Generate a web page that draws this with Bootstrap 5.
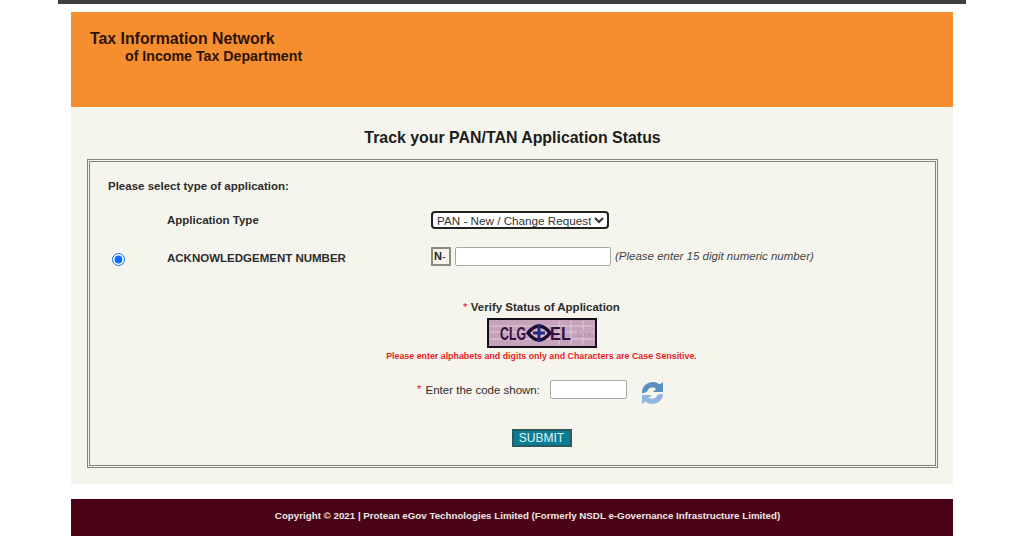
<!DOCTYPE html>
<html lang="en">
<head>
    <meta charset="UTF-8">
    <title>Track your PAN/TAN Application Status</title>
    <link href="https://cdn.jsdelivr.net/npm/bootstrap@5.3.0/dist/css/bootstrap.min.css" rel="stylesheet">
    <style>
        body { background: #fff; font-family: "Liberation Sans", Arial, sans-serif; color: #222; font-size: 11.5px; height: 536px; overflow: hidden; }
        .top-strip { width: 908px; height: 4px; margin: 0 0 8px 58px; background: #3f3f3f; }
        .page-wrap { width: 882px; margin-left: 71px; }
        .tin-head { height: 95px; background: #f68e2f; padding: 18px 0 0 19px; color: #2a1405; font-weight: 700; }
        .tin-head .l1 { font-size: 15.85px; line-height: 18px; }
        .tin-head .l2 { font-size: 14.2px; line-height: 17px; padding-left: 35px; }
        .tin-main { height: 377px; background: #f6f5ed; padding: 22px 15px 0 16px; }
        .tin-title { font-size: 15.9px; font-weight: 700; line-height: 18px; text-align: center; color: #1c1c1c; margin: 0 0 12px 0; }
        .tin-box { height: 309px; border: 3px double #85857f; padding: 17px 20px 0 18px; }
        .sel-note { font-weight: 700; line-height: 14px; margin-bottom: 17px; color: #2c2c2c; }
        .form-line { display: flex; align-items: center; }
        .radio-col { width: 59px; padding-left: 4px; }
        .radio-col input { display: block; margin: 0; width: 13px; height: 13px; accent-color: #0d6efd; }
        .label-col { width: 264px; font-weight: 700; color: #2c2c2c; }
        .type-line { height: 20px; margin-bottom: 18px; }
        .type-line .label-col { margin-top: 2px; }
        .type-select { font: 11.7px "Liberation Sans", Arial, sans-serif; width: 178px; height: 18px; color: #333; background: #fff; border: 2px solid #222; border-radius: 4px; padding: 0; }
        .ack-line { height: 22px; margin-bottom: 30px; }
        .n-tag { width: 20px; height: 19px; line-height: 15px; border: 2px solid #8c8c86; font-size: 11px; padding-left: 1px; margin-right: 4px; margin-top: -5px; background: #f6f5ed; color: #222; }
        .plain-input { border: 1px solid #a9a9a3; border-radius: 2px; background: #fff; height: 19px; padding: 0; }
        .ack-input { width: 156px; margin-right: 4px; margin-top: -5px; }
        .hint-text { font-style: italic; color: #444; margin-top: -5px; }
        .verify-block { text-align: center; padding-left: 60px; }
        .verify-title { font-weight: 700; line-height: 14px; color: #2c2c2c; margin-bottom: 4px; }
        .star { color: #e0262c; font-weight: 400; }
        .captcha-pic { display: block; margin: 0 auto 3px auto; }
        .case-note { color: #ea1c24; font-size: 8.85px; font-weight: 700; line-height: 11px; margin-bottom: 15px; }
        .code-line { display: flex; justify-content: center; align-items: center; height: 26px; margin-bottom: 26px; padding-right: 2px; }
        .code-label { margin-right: 10px; margin-top: 2px; color: #2c2c2c; }
        .code-input { width: 77px; margin-right: 14px; margin-top: -1px; }
        .refresh-pic { margin-top: 6px; }
        .submit-btn { display: inline-block; width: 60px; height: 18px; padding: 0; font: 12px/14px "Liberation Sans", Arial, sans-serif; color: #e4f3f6; background: #0a7d96; border: 2px solid #2d5a5a; border-radius: 0; }
        .tin-foot { height: 37px; margin-top: 15px; background: #4a0416; color: #f0e6e6; font-size: 9.75px; font-weight: 700; text-align: center; line-height: 34px; padding-left: 31px; }
    </style>
</head>
<body>
<div class="top-strip"></div>
<div class="page-wrap">
    <div class="tin-head">
        <div class="l1">Tax Information Network</div>
        <div class="l2">of Income Tax Department</div>
    </div>
    <div class="tin-main">
        <h1 class="tin-title">Track your PAN/TAN Application Status</h1>
        <div class="tin-box">
            <div class="sel-note">Please select type of application:</div>
            <div class="form-line type-line">
                <div class="radio-col"></div>
                <div class="label-col">Application Type</div>
                <select class="type-select"><option>PAN - New / Change Request</option></select>
            </div>
            <div class="form-line ack-line">
                <div class="radio-col"><input type="radio" name="app" checked></div>
                <div class="label-col">ACKNOWLEDGEMENT NUMBER</div>
                <div class="n-tag"><b>N</b>-</div>
                <input type="text" class="plain-input ack-input">
                <span class="hint-text">(Please enter 15 digit numeric number)</span>
            </div>
            <div class="verify-block">
                <div class="verify-title"><span class="star">*</span> Verify Status of Application</div>
                <svg class="captcha-pic" width="110" height="30" viewBox="0 0 110 30">
                    <rect x="1" y="1" width="108" height="28" fill="#c7a3bb" stroke="#16101e" stroke-width="2"/>
                    <path d="M3 8H107M3 14H107M3 21H107M72 3V27M84 3V27M96 3V27" stroke="#dfccd8" stroke-width="1"/>
                    <text x="13" y="22" font-family="Liberation Sans, sans-serif" font-size="19" font-weight="700" textLength="26" lengthAdjust="spacingAndGlyphs" fill="#34103f">CLG</text>
                    <text x="63" y="22" font-family="Liberation Sans, sans-serif" font-size="19" font-weight="700" textLength="21" lengthAdjust="spacingAndGlyphs" fill="#34103f">EL</text>
                    <text x="89" y="19" font-family="Liberation Sans, sans-serif" font-size="9" fill="#b58fa8">10X</text>
                    <path d="M41 15Q52 1 63 15Q52 29 41 15Z" fill="#d3b6c8" stroke="#1d0b30" stroke-width="3.500"/>
                    <path d="M46 15H58M52 6V24" stroke="#1e2a80" stroke-width="3"/>
                </svg>
                <div class="case-note">Please enter alphabets and digits only and Characters are Case Sensitive.</div>
                <div class="code-line">
                    <span class="star me-1">*</span>
                    <span class="code-label">Enter the code shown:</span>
                    <input type="text" class="plain-input code-input">
                    <svg class="refresh-pic" width="23" height="24" viewBox="0 0 23 24">
                        <path d="M1 12C1 5 6 1 12 1C15 1 17 2 18.500 3.500L22 1V11H12L15 8C13 6 9 6 7 9C6 10.500 5 12 1 12Z" fill="#5b8fbf"/>
                        <path d="M22 13C22 19 17 23 11 23C8 23 6 22 4.500 20.500L1 23V14H11L8 16.500C10 18.500 14 18 16 15C17 13.500 18 13 22 13Z" fill="#8fb8de"/>
                    </svg>
                </div>
                <button type="button" class="submit-btn">SUBMIT</button>
            </div>
        </div>
    </div>
    <div class="tin-foot">Copyright © 2021 | Protean eGov Technologies Limited (Formerly NSDL e-Governance Infrastructure Limited)</div>
</div>
<script src="https://cdn.jsdelivr.net/npm/bootstrap@5.3.0/dist/js/bootstrap.bundle.min.js"></script>
</body>
</html>
